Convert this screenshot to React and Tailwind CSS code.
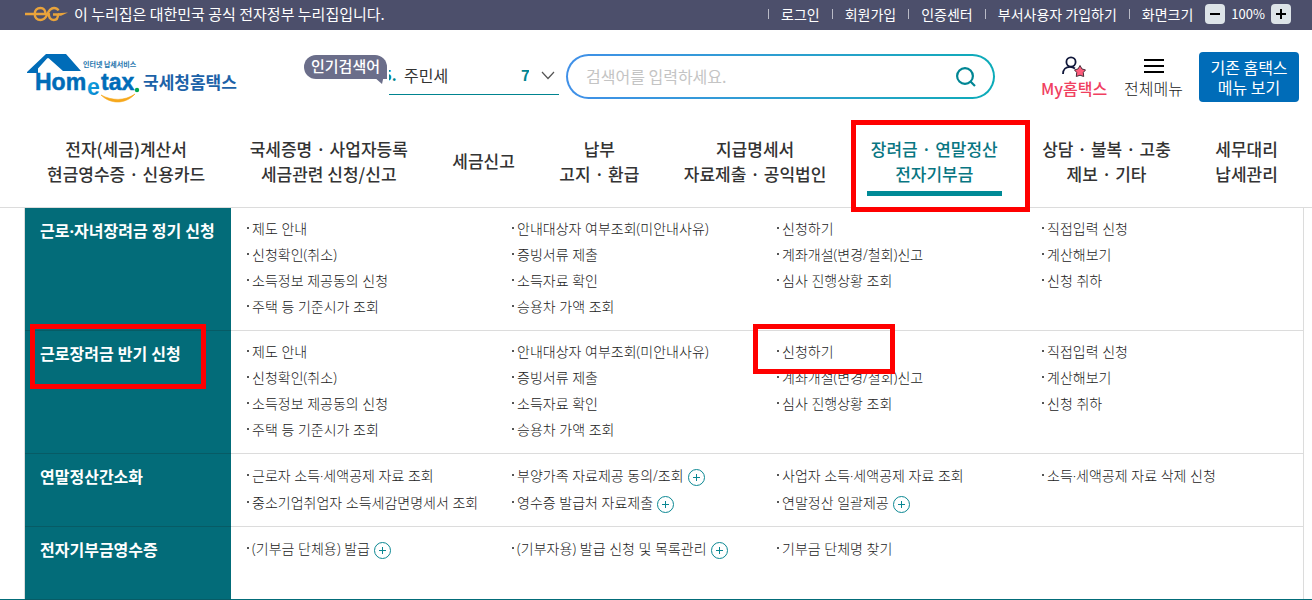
import React, { useState } from "react";

const TOP_LINKS = ["로그인", "회원가입", "인증센터", "부서사용자 가입하기"];

const NAV_ITEMS = [
  { lines: ["전자(세금)계산서", "현금영수증 · 신용카드"] },
  { lines: ["국세증명 · 사업자등록", "세금관련 신청/신고"] },
  { lines: ["세금신고"] },
  { lines: ["납부", "고지 · 환급"] },
  { lines: ["지급명세서", "자료제출 · 공익법인"] },
  { lines: ["장려금 · 연말정산", "전자기부금"], active: true },
  { lines: ["상담 · 불복 · 고충", "제보 · 기타"] },
  { lines: ["세무대리", "납세관리"] },
];

const INCENTIVE_COLUMNS = [
  ["제도 안내", "신청확인(취소)", "소득정보 제공동의 신청", "주택 등 기준시가 조회"],
  ["안내대상자 여부조회(미안내사유)", "증빙서류 제출", "소득자료 확인", "승용차 가액 조회"],
  ["신청하기", "계좌개설(변경/철회)신고", "심사 진행상황 조회"],
  ["직접입력 신청", "계산해보기", "신청 취하"],
];

const MENU_ROWS = [
  { title: "근로·자녀장려금 정기 신청", columns: INCENTIVE_COLUMNS },
  {
    title: "근로장려금 반기 신청",
    columns: INCENTIVE_COLUMNS,
    marked: true,
    markedItem: "신청하기",
  },
  {
    title: "연말정산간소화",
    loose: true,
    columns: [
      ["근로자 소득·세액공제 자료 조회", "중소기업취업자 소득세감면명세서 조회"],
      ["부양가족 자료제공 동의/조회", "영수증 발급처 자료제출"],
      ["사업자 소득·세액공제 자료 조회", "연말정산 일괄제공"],
      ["소득·세액공제 자료 삭제 신청"],
    ],
  },
  {
    title: "전자기부금영수증",
    loose: true,
    columns: [
      ["(기부금 단체용) 발급"],
      ["(기부자용) 발급 신청 및 목록관리"],
      ["기부금 단체명 찾기"],
      [],
    ],
  },
];

// Items that open a further sub menu
const EXPANDABLE = [
  "부양가족 자료제공 동의/조회",
  "영수증 발급처 자료제출",
  "연말정산 일괄제공",
  "(기부금 단체용) 발급",
  "(기부자용) 발급 신청 및 목록관리",
];

const GovMark = () => (
  <svg width="43" height="16" viewBox="0 0 43 16" fill="none" stroke="#e9a33b" strokeWidth="2.4" aria-hidden="true">
    <path d="M0 8H20.500C20.500 4 18.500 2 15.500 2C12 2 9.700 4.500 9.700 8C9.700 11.500 12 14 15.500 14C18.500 14 20.500 12 22 9C23.500 5 25.500 2 29 2C31 2 32.500 2.800 33.500 4.500" />
    <path d="M24 7C23 11 25.500 14 28.800 14C31.500 14 33 12 33 8.500H28" />
    <path d="M33 7.200L43 6.500L36 9.800H33Z" fill="#e9a33b" stroke="none" />
  </svg>
);

const Logo = () => (
  <svg width="212" height="52" viewBox="0 0 212 52" role="img" aria-label="Hometax 국세청홈택스">
    <defs>
      <linearGradient id="logoE" x1="0" y1="0" x2="1" y2="1">
        <stop offset="0" stopColor="#19b5e8" />
        <stop offset="1" stopColor="#0077c8" />
      </linearGradient>
    </defs>
    <path d="M20 2H40L55 19H37L23 6.500Q22 5.500 21 6.500L12 16.500V21H1V20Z" fill="#006cb8" />
    <text x="57" y="15" fontSize="7" fontWeight="700" fill="#2475ad" className="font-['Noto_Sans_CJK_KR',sans-serif]">
      인터넷 납세서비스
    </text>
    <g fontWeight="700" fontSize="23" fill="#006cb8" stroke="#006cb8" strokeWidth="0.5" className="font-['Liberation_Sans',sans-serif]">
      <text x="9" y="38">Hom</text>
      <text x="61" y="43" fill="url(#logoE)" stroke="none">e</text>
      <text x="75" y="38">tax</text>
    </g>
    <circle cx="111" cy="38" r="2.200" fill="#00a651" />
    <path d="M75 43C84 52 99 53 109 42C99 49 86 49 75 43Z" fill="#f6a81c" stroke="#f6a81c" strokeWidth="0.600" />
    <text x="117" y="37" fontSize="17" fontWeight="700" fill="#1c62a8" className="font-['Noto_Sans_CJK_KR',sans-serif]">
      국세청홈택스
    </text>
  </svg>
);

const PlusCircle = () => (
  <svg width="17" height="17" viewBox="0 0 17 17" fill="none" stroke="#0a8792" className="mt-1 ml-1 shrink-0" aria-hidden="true">
    <circle cx="8.500" cy="8.500" r="8" />
    <path d="M8.500 5V12M5 8.500H12" />
  </svg>
);

const MyIcon = () => (
  <svg width="24" height="22" viewBox="0 0 24 22" fill="none" aria-hidden="true">
    <circle cx="9" cy="6" r="4.600" stroke="#10173a" strokeWidth="1.800" />
    <path d="M1 18C1 13.500 4 10.800 8 10.800C10 10.800 11.500 11.300 13 12.500" stroke="#10173a" strokeWidth="1.800" />
    <path
      d="M18 9.500L20 13L23.500 13.900L21.300 16.500L21.700 20.500L18 19.200L14.300 20.500L14.700 16.500L12.500 13.900L16 13Z"
      fill="#ff5c7c"
      stroke="#4a2f3b"
      strokeLinejoin="round"
    />
  </svg>
);

const TopBar = () => {
  const [zoom, setZoom] = useState(100);

  return (
    <div className="flex h-[30px] items-center justify-between bg-[#4c4f6b] pr-[21px] pb-0.5 pl-[25px] text-sm text-white">
      <div className="flex items-center gap-1.5">
        <GovMark />
        <span className="text-[15px] leading-5">이 누리집은 대한민국 공식 전자정부 누리집입니다.</span>
      </div>
      <div className="flex items-center">
        {TOP_LINKS.map((label) => (
          <a key={label} href="#" className="flex items-center">
            <span className="mr-3 h-2.5 w-px bg-[#b9bac6]" />
            <span className="mr-3">{label}</span>
          </a>
        ))}
        <span className="mr-3 h-2.5 w-px bg-[#b9bac6]" />
        <span className="mr-3">화면크기</span>
        <button
          aria-label="축소"
          onClick={() => setZoom(zoom - 10)}
          className="flex h-5 w-5 items-center justify-center rounded-sm bg-[#dde4e8]"
        >
          <span className="h-0.5 w-2.5 bg-black" />
        </button>
        <span className="mx-1.5 text-[13px]">{zoom}%</span>
        <button
          aria-label="확대"
          onClick={() => setZoom(zoom + 10)}
          className="flex h-5 w-5 items-center justify-center rounded-sm bg-[#dde4e8]"
        >
          <svg width="10" height="10" viewBox="0 0 10 10" stroke="#000" strokeWidth="2">
            <path d="M5 0V10M0 5H10" />
          </svg>
        </button>
      </div>
    </div>
  );
};

const PopularSearch = () => (
  <div className="ml-[66px] flex shrink-0 items-start">
    <div className="relative z-10 mt-[3px] h-6 w-[83px] rounded-full rounded-br-lg bg-[#6b6e8a] text-center text-[15px] leading-[22px] font-medium text-white">
      인기검색어
      <svg width="11" height="9" viewBox="0 0 11 9" className="absolute top-5 right-0.5" aria-hidden="true">
        <path d="M0 2L10 0L8 9Z" fill="#6b6e8a" />
      </svg>
    </div>
    <div className="ml-0.5 flex h-[43px] w-[170px] items-center overflow-hidden border-b border-[#008490] pt-1 text-base">
      <span className="flex w-[15px] justify-start overflow-hidden">
        <b className="-ml-1.5 text-[15px] text-[#008490]">5.</b>
      </span>
      <a href="#" className="grow text-[#333]">주민세</a>
      <b className="mr-3 w-2 overflow-hidden text-[15px] text-[#008490]">7</b>
      <button aria-label="인기검색어 펼치기" className="mr-1">
        <svg width="14" height="9" viewBox="0 0 14 9" fill="none" stroke="#555" strokeWidth="1.200">
          <path d="M1 1L7 7.500L13 1" />
        </svg>
      </button>
    </div>
  </div>
);

const Header = () => (
  <header className="flex h-[90px] items-start pt-[22px] pr-[13px] pl-[26px]">
    <a href="#" className="shrink-0">
      <Logo />
    </a>
    <PopularSearch />
    <form
      onSubmit={(e) => e.preventDefault()}
      className="mt-0.5 ml-[7px] flex h-[45px] grow rounded-full bg-linear-to-r from-[#4090e8] to-[#0aabb8] p-0.5"
    >
      <div className="flex grow items-center rounded-full bg-white pr-4 pl-[18px]">
        <input
          aria-label="검색어"
          placeholder="검색어를 입력하세요."
          className="min-w-0 grow pb-0.5 text-base text-[#333] outline-none placeholder:text-[#c4c4c4]"
        />
        <button aria-label="검색">
          <svg width="22" height="22" viewBox="0 0 22 22" fill="none" stroke="#008694" strokeWidth="2.200">
            <circle cx="10" cy="10" r="7.900" />
            <path d="M15.500 15.500L20 20" />
          </svg>
        </button>
      </div>
    </form>
    <a href="#" className="mt-1 ml-[46px] flex shrink-0 flex-col items-center text-base leading-5 font-medium text-[#f0405f]">
      <MyIcon />
      My홈택스
    </a>
    <a href="#" className="mt-1 ml-[17px] flex shrink-0 flex-col items-center text-base leading-5 font-light text-[#222]">
      <svg width="20" height="22" viewBox="0 0 20 22" stroke="#000" strokeWidth="2" aria-hidden="true">
        <path d="M0 4H20M0 10H20M0 16H20" />
      </svg>
      전체메뉴
    </a>
    <button className="ml-4 h-[50px] w-[100px] shrink-0 rounded bg-[#006cb8] text-base leading-5 text-white">
      기존 홈택스
      <br />
      메뉴 보기
    </button>
  </header>
);

const MainNav = () => (
  <nav className="flex h-[88px] items-center justify-between border-b border-[#dcdcdc] pr-[34px] pb-1.5 pl-[47px] text-center text-[17px] leading-[25px] font-medium text-[#333]">
    {NAV_ITEMS.map(({ lines, active }) => (
      <a key={lines[0]} href="#" className={active ? "relative text-[#087682]" : ""}>
        {lines.map((line) => (
          <span key={line} className="block whitespace-nowrap">
            {line}
          </span>
        ))}
        {active && (
          <>
            <span className="absolute -inset-x-1 -bottom-2.5 h-[5px] bg-[#008a96]" />
            <span className="absolute -top-4 -right-8 -bottom-[26px] -left-5 z-10 border-[5px] border-[#ff0000]" />
          </>
        )}
      </a>
    ))}
  </nav>
);

const MenuRow = ({ title, columns, loose, marked, markedItem }) => (
  <section className="flex border-b border-[#dcdcdc] font-['Open_Sans','Noto_Sans_CJK_KR',sans-serif] last:grow last:border-b-0">
    <div className="relative w-[206px] shrink-0 bg-[#036c79]">
      <h2 className="py-[9px] pl-[15px] text-base leading-7 font-bold whitespace-nowrap text-white">{title}</h2>
      <span className="absolute inset-x-0 top-full h-px bg-[#075b65]" />
      {marked && (
        <span className="absolute -top-[7px] right-[25px] left-[5px] z-10 h-[65px] border-[5px] border-[#ff0000]" />
      )}
    </div>
    <div className="grid grow grid-cols-4 pt-2 pb-2.5 pl-3">
      {columns.map((items, i) => (
        <ul key={i} className={loose ? "text-sm leading-[27px]" : "text-sm leading-[26px]"}>
          {items.map((item) => (
            <li key={item} className="relative pl-1">
              <a href="#" className="flex items-center font-light whitespace-nowrap text-[#222]">
                <span className="mr-[3px] mb-0.5 size-0.5 bg-[#555]" />
                {item}
                {EXPANDABLE.includes(item) && <PlusCircle />}
              </a>
              {item === markedItem && (
                <span className="absolute -top-[15px] -left-5 z-10 h-[50px] w-[142px] border-[5px] border-[#ff0000]" />
              )}
            </li>
          ))}
        </ul>
      ))}
    </div>
  </section>
);

const App = () => {
  return (
    <div className="flex min-h-screen flex-col bg-white font-['Noto_Sans_CJK_KR',sans-serif]">
      <TopBar />
      <Header />
      <MainNav />
      <main className="flex grow flex-col border-b border-[#036c79]">
        <div className="mr-2 ml-6 flex grow flex-col border-x border-[#dcdcdc]">
          {MENU_ROWS.map((row) => (
            <MenuRow key={row.title} {...row} />
          ))}
        </div>
      </main>
    </div>
  );
};

export default App;
